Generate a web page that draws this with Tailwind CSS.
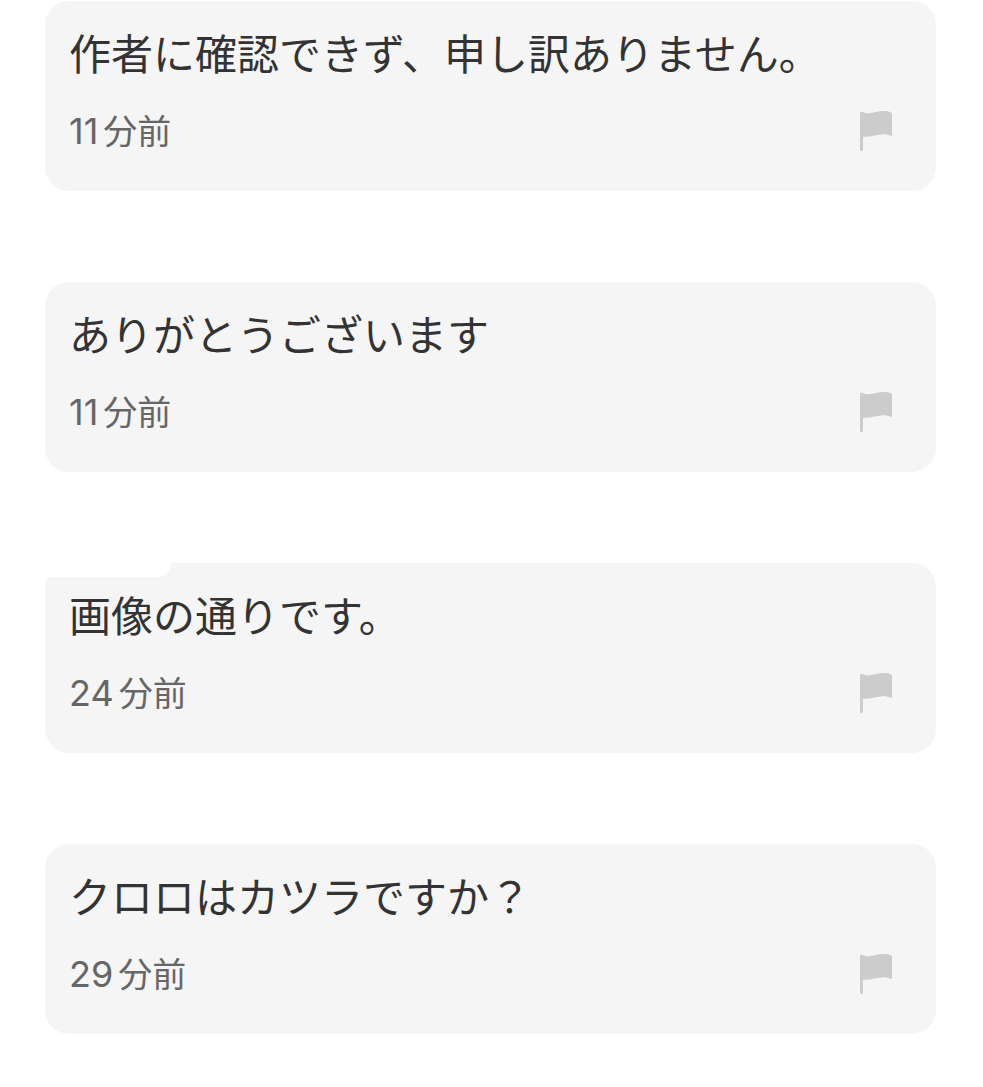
<!DOCTYPE html>
<html lang="ja">
<head>
    <meta charset="UTF-8">
    <meta name="viewport" content="width=device-width, initial-scale=1.0">
    <title>コメント</title>
    <script src="https://cdn.jsdelivr.net/npm/@tailwindcss/browser@4"></script>
</head>
<body class="bg-white text-[#333333] font-['Noto_Sans_CJK_JP',sans-serif]">
    <svg class="hidden">
        <symbol id="flag" viewBox="0 0 32 40">
            <path d="M0 1.8Q0 .6 1.4 .7C4 1.3 6 2.4 9 2.3C14 2 18 .1 23 .1C26 .1 29 .5 31 1.4Q32 1.8 32 2.8V24Q32 25.3 30.5 24.8C27 23.6 24 23.2 21 23.4C15 23.8 10 26.3 3 25.7V39Q3 40 1.5 40Q0 40 0 39Z"/>
        </symbol>
    </svg>

    <main class="flex flex-col gap-[91px] pt-px pl-[45px] pr-[47px]">
        <article class="rounded-3xl bg-[#f5f5f5] pt-[21px] pb-9 pl-6 pr-11">
            <p class="text-[42px] leading-[60px]">作者に確認できず、申し訳ありません。</p>
            <div class="mt-6 flex items-center justify-between">
                <time class="flex items-baseline gap-[5px] text-[34px] leading-[48px] text-[#666666]"><span class="font-[Inter] text-[36px]">11</span>分前</time>
                <button type="button" aria-label="報告" class="text-[#cccccc]"><svg class="h-10 w-8" fill="currentColor"><use href="#flag"/></svg></button>
            </div>
        </article>

        <article class="rounded-3xl bg-[#f5f5f5] pt-[21px] pb-9 pl-6 pr-11">
            <p class="text-[42px] leading-[60px]">ありがとうございます</p>
            <div class="mt-6 flex items-center justify-between">
                <time class="flex items-baseline gap-[5px] text-[34px] leading-[48px] text-[#666666]"><span class="font-[Inter] text-[36px]">11</span>分前</time>
                <button type="button" aria-label="報告" class="text-[#cccccc]"><svg class="h-10 w-8" fill="currentColor"><use href="#flag"/></svg></button>
            </div>
        </article>

        <article class="relative rounded-3xl bg-[#f5f5f5] pt-[21px] pb-9 pl-6 pr-11">
            <!-- white tab over the top left corner -->
            <div class="absolute top-0 left-0 h-[14px] w-[126px] rounded-br-2xl bg-white"></div>
            <p class="text-[42px] leading-[60px]">画像の通りです。</p>
            <div class="mt-6 flex items-center justify-between">
                <time class="flex items-baseline gap-[5px] text-[34px] leading-[48px] text-[#666666]"><span class="font-[Inter] text-[36px]">24</span>分前</time>
                <button type="button" aria-label="報告" class="text-[#cccccc]"><svg class="h-10 w-8" fill="currentColor"><use href="#flag"/></svg></button>
            </div>
        </article>

        <article class="rounded-3xl bg-[#f5f5f5] pt-[21px] pb-9 pl-6 pr-11">
            <p class="text-[42px] leading-[60px]">クロロはカツラですか？</p>
            <div class="mt-6 flex items-center justify-between">
                <time class="flex items-baseline gap-[5px] text-[34px] leading-[48px] text-[#666666]"><span class="font-[Inter] text-[36px]">29</span>分前</time>
                <button type="button" aria-label="報告" class="text-[#cccccc]"><svg class="h-10 w-8" fill="currentColor"><use href="#flag"/></svg></button>
            </div>
        </article>
    </main>
</body>
</html>
